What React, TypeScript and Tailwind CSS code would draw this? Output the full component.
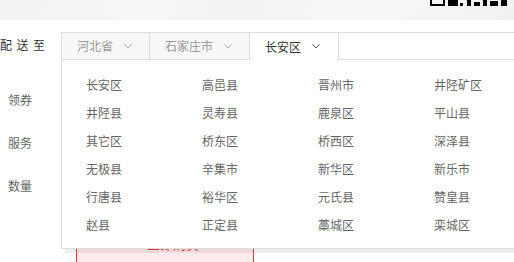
import React from 'react';

const tabs = [
  { name: '河北省', active: false },
  { name: '石家庄市', active: false },
  { name: '长安区', active: true },
];

const areas = [
  '长安区', '高邑县', '晋州市', '井陉矿区',
  '井陉县', '灵寿县', '鹿泉区', '平山县',
  '其它区', '桥东区', '桥西区', '深泽县',
  '无极县', '辛集市', '新华区', '新乐市',
  '行唐县', '裕华区', '元氏县', '赞皇县',
  '赵县', '正定县', '藁城区', '栾城区',
];

const Chevron: React.FC<{ active?: boolean }> = ({ active }) => (
  <svg width="8" height="5" viewBox="0 0 8 5" className="shrink-0">
    <polyline
      points="0.5,0.5 4,4 7.5,0.5"
      fill="none"
      stroke={active ? '#555' : '#aaa'}
      strokeWidth="1"
    />
  </svg>
);

const App: React.FC = () => {
  return (
    <div className="relative w-[514px] h-[262px] overflow-hidden bg-white font-['Noto_Sans_CJK_SC',sans-serif] text-[12px]">
      {/* top band with cut-off logo */}
      <div className="h-[20px] bg-[linear-gradient(115deg,#f2f2f2_0%,#f7f7f7_30%,#f2f2f2_45%,#f8f8f8_70%,#f1f1f1_100%)] flex justify-end pr-[6px]">
        <svg width="78" height="7" viewBox="0 0 78 7">
          <rect x="1" y="-2" width="13" height="7" fill="none" stroke="#000" strokeWidth="2" />
          <rect x="18" y="0" width="10" height="6" fill="#000" />
          <rect x="30" y="3" width="3" height="3" fill="#000" />
          <rect x="37" y="0" width="4" height="6" fill="#000" />
          <rect x="44" y="2" width="6" height="4" fill="#000" />
          <rect x="53" y="0" width="4" height="6" fill="#000" />
          <rect x="60" y="1" width="8" height="5" fill="#000" />
          <rect x="71" y="0" width="6" height="6" fill="#000" />
        </svg>
      </div>

      {/* left labels */}
      <div className="flex flex-col text-[#666]">
        <div className="mt-[18px] h-[14px] leading-[14px] tracking-[4.5px] text-[#333]">配送至</div>
        <div className="mt-[41px] pl-[8px] h-[14px] leading-[14px]">领券</div>
        <div className="mt-[29px] pl-[8px] h-[14px] leading-[14px]">服务</div>
        <div className="mt-[29px] pl-[8px] h-[14px] leading-[14px]">数量</div>
      </div>

      {/* buy button partly under the dropdown */}
      <div className="absolute left-[76px] top-[222px] w-[178px] h-[50px] border border-[#e4393c] bg-[#fdeaea] flex items-start justify-center">
        <span className="ml-[16px] mt-[14px] leading-[14px] text-[13px] text-[#e4393c]">立即购买</span>
      </div>

      {/* area dropdown */}
      <div className="absolute left-[61px] top-[32px] w-[470px] border border-[#ddd] bg-white shadow-[4px_4px_0_rgba(0,0,0,0.07)]">
        <div className="flex h-[27px] bg-white">
          {tabs.map((tab) => (
            <div
              key={tab.name}
              className={
                tab.active
                  ? 'flex items-center gap-[11px] pl-[15px] pr-[18px] border-r border-[#ddd] bg-white text-[#333]'
                  : 'flex items-center gap-[11px] pl-[15px] pr-[17px] border-r border-b border-[#ddd] bg-[#f7f7f7] text-[#999]'
              }
            >
              <span>{tab.name}</span>
              <Chevron active={tab.active} />
            </div>
          ))}
          <div className="flex-1 border-b border-[#ddd]" />
        </div>
        <div className="grid grid-cols-[116px_116px_116px_116px] pl-[24px] pt-[11px] pb-[9px] text-[#666]">
          {areas.map((a) => (
            <div key={a} className="h-[28px] leading-[28px]">
              {a}
            </div>
          ))}
        </div>
      </div>
    </div>
  );
};

export default App;
